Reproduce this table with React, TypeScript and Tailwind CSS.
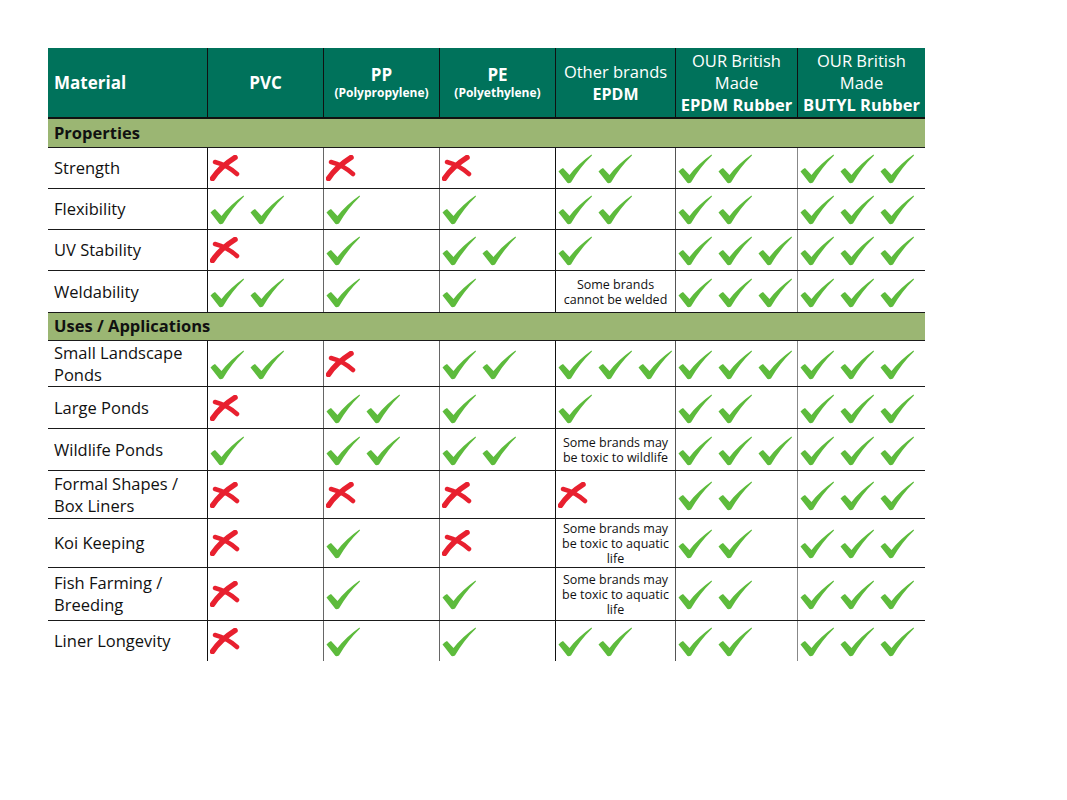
import React from "react";

type Cell = number | "x" | string;

type Row = {
    label: string[];
    h: string;
    cells: Cell[];
};

const properties: Row[] = [
    { label: ["Strength"], h: "h-[41px]", cells: ["x", "x", "x", 2, 2, 3] },
    { label: ["Flexibility"], h: "h-[41px]", cells: [2, 1, 1, 2, 2, 3] },
    { label: ["UV Stability"], h: "h-[41px]", cells: ["x", 1, 2, 1, 3, 3] },
    { label: ["Weldability"], h: "h-[42px]", cells: [2, 1, 1, "Some brands|cannot be welded", 3, 3] },
];

const uses: Row[] = [
    { label: ["Small Landscape", "Ponds"], h: "h-[46px]", cells: [2, "x", 2, 3, 3, 3] },
    { label: ["Large Ponds"], h: "h-[42px]", cells: ["x", 2, 1, 1, 2, 3] },
    { label: ["Wildlife Ponds"], h: "h-[42px]", cells: [1, 2, 2, "Some brands may|be toxic to wildlife", 3, 3] },
    { label: ["Formal Shapes /", "Box Liners"], h: "h-[48px]", cells: ["x", "x", "x", "x", 2, 3] },
    { label: ["Koi Keeping"], h: "h-[49px]", cells: ["x", 1, "x", "Some brands may|be toxic to aquatic|life", 2, 3] },
    { label: ["Fish Farming /", "Breeding"], h: "h-[53px]", cells: ["x", 1, 1, "Some brands may|be toxic to aquatic|life", 2, 3] },
    { label: ["Liner Longevity"], h: "h-[40px]", cells: ["x", 1, 1, 2, 2, 3] },
];

const cols = "grid grid-cols-[159px_116px_116px_116px_120px_122px_128px]";
const lineColors = ["border-[#111]", "border-[#666]", "border-[#666]", "border-[#111]", "border-[#555]", "border-[#888]"];

function Check() {
    return (
        <svg width="34" height="30" viewBox="0 0 34 30" className="shrink-0">
            <path
                d="M0.5 17.5 Q3 14.5 5 14 L11.5 21 Q20 10 33.5 0.5 L34 1.5 Q22 13 13 28.5 Q11 29.5 9.5 29 Z"
                fill="#5dbb3c"
            />
        </svg>
    );
}

function Cross() {
    return (
        <svg width="30" height="26" viewBox="0 0 30 26" className="shrink-0">
            <path d="M2.5 23.5 Q10 12 25 2.5" stroke="#e8202f" strokeWidth="5.5" strokeLinecap="round" fill="none" />
            <path d="M5 7 Q17 10 27 19" stroke="#e8202f" strokeWidth="4.5" strokeLinecap="round" fill="none" />
        </svg>
    );
}

function Content({ c }: { c: Cell }) {
    if (c === "x") {
        return (
            <div className="pl-[2px]">
                <Cross />
            </div>
        );
    }
    if (typeof c === "number") {
        return (
            <div className="flex gap-[6px] pl-[2px] pt-[2px]">
                {Array.from({ length: c }).map((_, i) => (
                    <Check key={i} />
                ))}
            </div>
        );
    }
    return (
        <div className="w-full text-center text-[12.5px] leading-[15px] text-[#111]">
            {c.split("|").map((l) => (
                <div key={l}>{l}</div>
            ))}
        </div>
    );
}

function BodyRow({ row, last }: { row: Row; last: boolean }) {
    return (
        <div className={`${cols} ${row.h} ${last ? "" : "border-b border-[#1a1a1a]"}`}>
            <div className="flex flex-col justify-center pl-[6px] text-[16.5px] leading-[22px] text-[#111]">
                {row.label.map((l) => (
                    <div key={l}>{l}</div>
                ))}
            </div>
            {row.cells.map((c, i) => (
                <div key={i} className={`flex items-center border-l ${lineColors[i]}`}>
                    <Content c={c} />
                </div>
            ))}
        </div>
    );
}

function Section({ title, h }: { title: string; h: string }) {
    return (
        <div className={`${h} flex items-center bg-[#9bb673] pl-[6px] border-b border-[#1a1a1a] text-[16.5px] font-bold text-[#111]`}>
            {title}
        </div>
    );
}

export default function App() {
    return (
        <main className="min-h-screen bg-white pt-[48px] pl-[48px]" style={{ fontFamily: '"Open Sans", "Noto Sans", sans-serif' }}>
            <div className="w-[877px]">
                <div className={`${cols} h-[71px] bg-[#00725b] text-white border-b-2 border-[#111]`}>
                    <div className="flex items-center pl-[6px] text-[17px] font-bold">Material</div>
                    <div className="flex items-center justify-center border-l border-[#111] text-[17px] font-bold">PVC</div>
                    <div className="flex flex-col items-center justify-center border-l border-[#111] leading-[18px] pt-[2px]">
                        <span className="text-[17px] font-bold">PP</span>
                        <span className="text-[12px] font-bold">(Polypropylene)</span>
                    </div>
                    <div className="flex flex-col items-center justify-center border-l border-[#111] leading-[18px] pt-[2px]">
                        <span className="text-[17px] font-bold">PE</span>
                        <span className="text-[12px] font-bold">(Polyethylene)</span>
                    </div>
                    <div className="flex flex-col items-center justify-center border-l border-[#111] text-[16px] leading-[22px]">
                        <span className="text-[16.5px]">Other brands</span>
                        <span className="font-bold">EPDM</span>
                    </div>
                    <div className="flex flex-col items-center justify-center border-l border-[#111] text-[16.5px] leading-[22px]">
                        <span>OUR British</span>
                        <span>Made</span>
                        <span className="font-bold whitespace-nowrap">EPDM Rubber</span>
                    </div>
                    <div className="flex flex-col items-center justify-center border-l border-[#111] text-[16.5px] leading-[22px]">
                        <span>OUR British</span>
                        <span>Made</span>
                        <span className="font-bold whitespace-nowrap">BUTYL Rubber</span>
                    </div>
                </div>

                <Section title="Properties" h="h-[29px]" />
                {properties.map((r) => (
                    <BodyRow key={r.label.join()} row={r} last={false} />
                ))}

                <Section title="Uses / Applications" h="h-[28px]" />
                {uses.map((r, i) => (
                    <BodyRow key={r.label.join()} row={r} last={i === uses.length - 1} />
                ))}
            </div>
        </main>
    );
}
